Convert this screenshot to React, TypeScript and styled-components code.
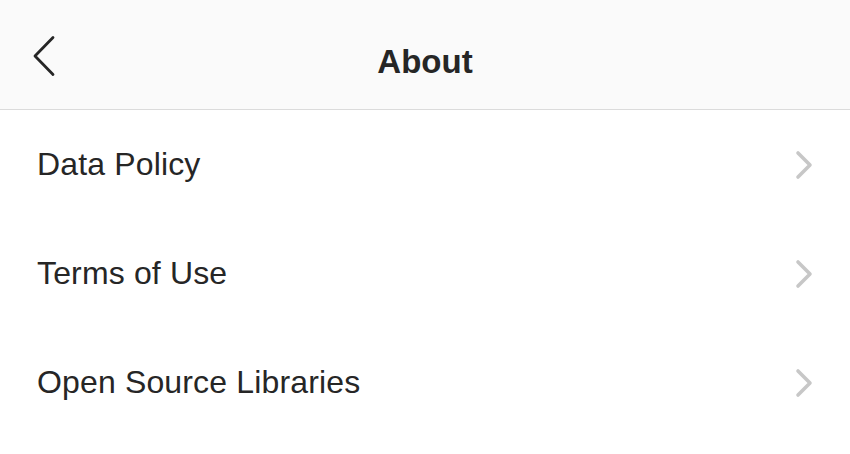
import React from 'react';
import styled, { createGlobalStyle } from 'styled-components';

const GlobalStyle = createGlobalStyle`
  body {
    margin: 0;
    background: #ffffff;
    font-family: "Liberation Sans", Arial, sans-serif;
    color: #262626;
  }
`;

const items = ['Data Policy', 'Terms of Use', 'Open Source Libraries'];

const App: React.FC = () => {
  return (
    <Page>
      <GlobalStyle />
      <Header>
        <BackButton aria-label="Back">
          <svg width="24" height="42" viewBox="0 0 24 42" fill="none">
            <path d="M21 2.5 L3 21 L21 39.5" stroke="#262626" strokeWidth="2.8" strokeLinecap="round" strokeLinejoin="round" />
          </svg>
        </BackButton>
        <Title>About</Title>
      </Header>
      <List>
        {items.map((label) => (
          <Row key={label}>
            <Label>{label}</Label>
            <svg width="22" height="30" viewBox="0 0 22 30" fill="none">
              <path d="M4 3 L16 15 L4 27" stroke="#c7c7c7" strokeWidth="3.6" strokeLinecap="round" strokeLinejoin="round" />
            </svg>
          </Row>
        ))}
      </List>
    </Page>
  );
};

const Page = styled.div`
  display: flex;
  flex-direction: column;
  width: 850px;
  height: 454px;
  overflow: hidden;
  background: #ffffff;
`;

const Header = styled.div`
  position: relative;
  display: flex;
  align-items: center;
  justify-content: center;
  height: 109px;
  flex-shrink: 0;
  background: #fafafa;
  border-bottom: 1px solid #dbdbdb;
`;

const BackButton = styled.button`
  position: absolute;
  left: 32px;
  top: 35px;
  display: flex;
  padding: 0;
  border: none;
  background: none;
  cursor: pointer;
`;

const Title = styled.h1`
  margin: 0;
  font-size: 33px;
  font-weight: 700;
  color: #262626;
  line-height: 1;
  padding-top: 14px;
`;

const List = styled.div`
  display: flex;
  flex-direction: column;
`;

const Row = styled.div`
  display: flex;
  align-items: center;
  justify-content: space-between;
  height: 109px;
  padding: 0 34px 0 37px;
`;

const Label = styled.span`
  font-size: 32px;
  letter-spacing: 0.15px;
  color: #262626;
  line-height: 1;
  padding-bottom: 2px;
`;

export default App;
